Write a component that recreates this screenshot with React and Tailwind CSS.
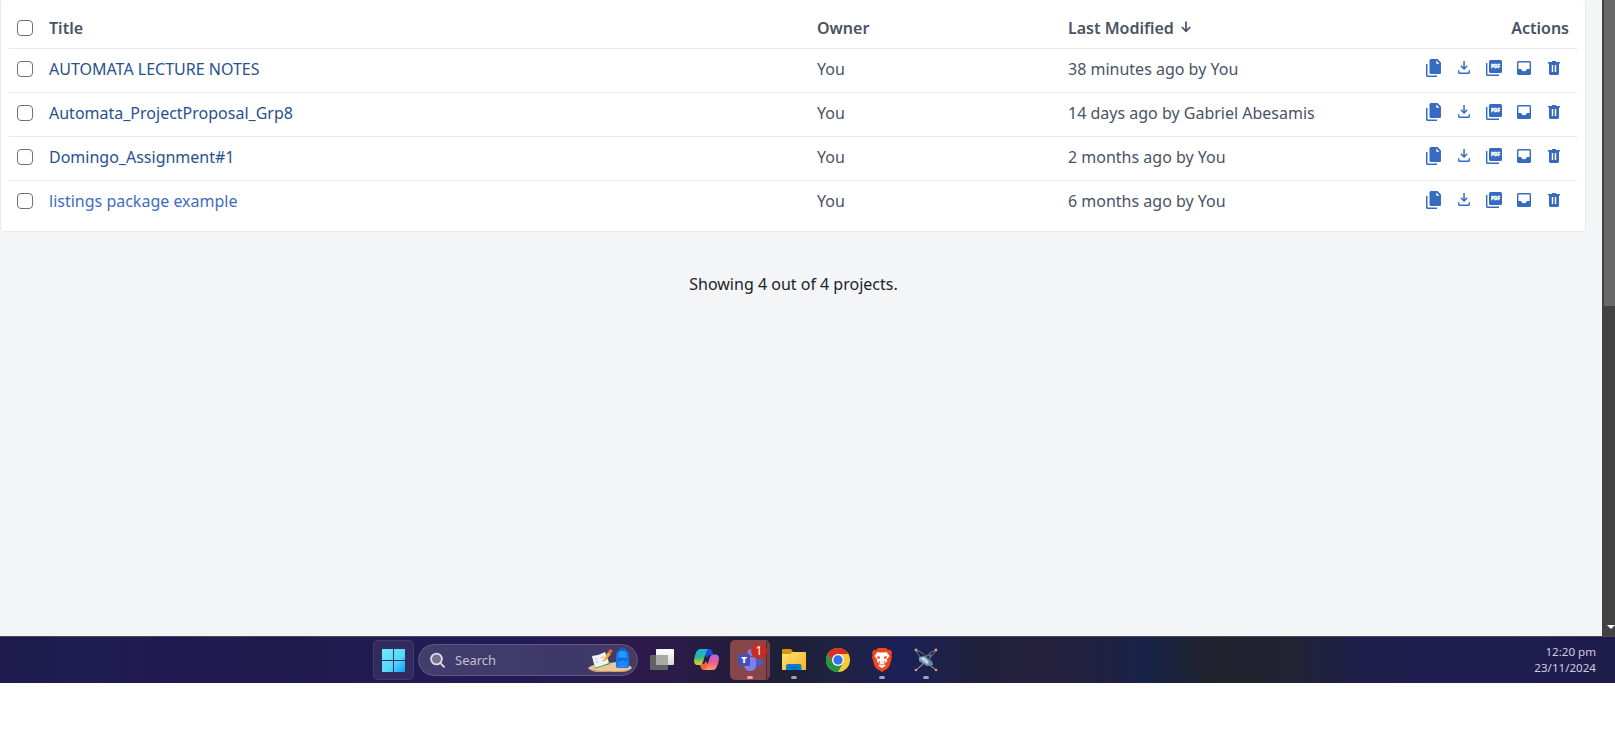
import React from "react";

const projects = [
  { title: "AUTOMATA LECTURE NOTES", modified: "38 minutes ago by You", tone: "text-[#28518f]" },
  { title: "Automata_ProjectProposal_Grp8", modified: "14 days ago by Gabriel Abesamis", tone: "text-[#28518f]" },
  { title: "Domingo_Assignment#1", modified: "2 months ago by You", tone: "text-[#28518f]" },
  { title: "listings package example", modified: "6 months ago by You", tone: "text-[#3f6cc0]" },
];

function Checkbox({ label }) {
  return (
    <input
      type="checkbox"
      aria-label={label}
      className="block size-4 shrink-0 appearance-none rounded-[4px] border border-[#677283] bg-white"
    />
  );
}

function ActionButton({ label, children }) {
  return (
    <button type="button" aria-label={label} className="flex w-[30px] justify-center text-[#366cbf]">
      <svg width="20" height="20" viewBox="0 0 20 20" fill="currentColor">
        {children}
      </svg>
    </button>
  );
}

function Actions() {
  return (
    <div className="flex w-[150px]">
      <ActionButton label="Copy">
        <g transform="translate(-1 0)">
          <path d="M8 1h6.500L18 4.500V14.500a1.500 1.500 0 0 1-1.500 1.500H8a1.500 1.500 0 0 1-1.500-1.500v-12A1.500 1.500 0 0 1 8 1z" />
          <path d="M13.300 2.600v3.200h3.200z" fill="#fff" />
          <path d="M3 6h1.500v11.500H14V19H4.500A1.500 1.500 0 0 1 3 17.500z" />
        </g>
      </ActionButton>
      <ActionButton label="Download">
        <path d="M9.300 3h1.500v6.200l2-2 1 1-3.750 3.700L6.300 8.200l1-1 2 2z" />
        <path d="M4 12.300h1.400v2.200h9.200v-2.200H16v2.200a1.400 1.400 0 0 1-1.400 1.400H5.400A1.400 1.400 0 0 1 4 14.500z" />
      </ActionButton>
      <ActionButton label="Download PDF">
        <path d="M6.500 2h10A1.500 1.500 0 0 1 18 3.500v10a1.500 1.500 0 0 1-1.500 1.500h-10A1.500 1.500 0 0 1 5 13.500v-10A1.500 1.500 0 0 1 6.500 2z" />
        <path d="M2 5h1.400v11.500H15V18H3.500A1.500 1.500 0 0 1 2 16.500z" />
        <text x="11.500" y="10.200" textAnchor="middle" fontSize="4.800" fontWeight="800" fontFamily="Open Sans, sans-serif" fill="#fff" stroke="#fff" strokeWidth=".35">PDF</text>
      </ActionButton>
      <ActionButton label="Archive">
        <path fillRule="evenodd" d="M4.500 3h11A1.500 1.500 0 0 1 17 4.500v11a1.500 1.500 0 0 1-1.500 1.500h-11A1.500 1.500 0 0 1 3 15.500v-11A1.500 1.500 0 0 1 4.500 3zm-.1 1.400v6.600h2.700c.6 1.500 1.500 2.200 2.900 2.200s2.300-.7 2.900-2.200h2.700V4.400z" />
      </ActionButton>
      <ActionButton label="Trash">
        <path fillRule="evenodd" d="M8 3h4v1h4v1.500h-1v10a1.500 1.500 0 0 1-1.500 1.500h-7A1.500 1.500 0 0 1 5 15.500v-10H4V4h4zM7.800 7v7h1.400V7zm3 0v7h1.400V7z" />
      </ActionButton>
    </div>
  );
}

function ProjectTable() {
  return (
    <section className="mr-4 h-[232px] rounded-[4px] border border-t-0 border-[#e7e9ee] bg-white px-2 text-[16px] leading-6 text-[#495365]">
      <div className="flex h-12 items-center pt-2 pl-2 font-semibold">
        <Checkbox label="Select all" />
        <div className="ml-4 w-[768px]">Title</div>
        <div className="w-[251px]">Owner</div>
        <div className="flex flex-1 items-center gap-[7px]">
          Last Modified
          <svg className="mb-[2px]" width="10" height="12" viewBox="0 0 10 12" fill="none" stroke="currentColor" strokeWidth="1.700">
            <path d="M5 .5v9.500M.8 6 5 10.200 9.200 6" />
          </svg>
        </div>
        <div className="pr-2">Actions</div>
      </div>
      {projects.map((p) => (
        <div key={p.title} className="flex h-11 items-center border-t border-[#e7e9ee] pr-2 pb-[3px] pl-2">
          <Checkbox label={"Select " + p.title} />
          <div className={"ml-4 w-[768px] " + p.tone}>{p.title}</div>
          <div className="w-[251px]">You</div>
          <div className="flex-1">{p.modified}</div>
          <div className="pb-[2px]">
            <Actions />
          </div>
        </div>
      ))}
    </section>
  );
}

function WindowsLogo() {
  return (
    <svg width="23" height="23" viewBox="0 0 23 23">
      <defs>
        <linearGradient id="win" gradientUnits="userSpaceOnUse" x1="0" y1="0" x2="23" y2="23">
          <stop offset="0" stopColor="#72eafc" />
          <stop offset=".6" stopColor="#52d8fb" />
          <stop offset="1" stopColor="#0c9cf5" />
        </linearGradient>
      </defs>
      <path fill="url(#win)" d="M0 0h11v11H0zM12 0h11v11H12zM0 12h11v11H0zM12 12h11v11H12z" />
    </svg>
  );
}

function SearchArt() {
  return (
    <svg width="46" height="26" viewBox="0 0 46 26">
      <path d="M1 21q5-4 13-4l16-2 11 3q3 1 4 3-4 4-12 4H13Q4 25 1 21z" fill="#e8c79d" />
      <path d="M2 21.500q8 3 21 2.500 15 1 21-2.500-3 3.500-12 3.500H14Q6 25 2 21.500z" fill="#c39a6b" />
      <path d="m5 10 14-4 4 11-15 4.500z" fill="#368f43" />
      <path d="m5 9 6-1 3 11-6 1.500zM11 8l7-3 4 11-8 3z" fill="#f2f3f4" />
      <path d="m8 12 2-.6m-1 4 2-.6m3-4 3-1m-2 4 4-1" stroke="#b5b7bd" fill="none" />
      <path d="m17 12 4-7 3 2-4 5-4 2.500z" fill="#f6a72c" />
      <path d="m21 4.500 2-2.500 3 2-2 2.500z" fill="#ed644f" />
      <path d="M33 4V2.500q2.500-3 5 0V4" stroke="#1467ca" strokeWidth="1.300" fill="none" />
      <path d="M29 9q0-6.500 6.500-6.500T42 9v10q0 2-2 2h-9q-2 0-2-2z" fill="#1174e6" />
      <path d="M31.500 6q4-4 8 0v4.500h-8z" fill="#259bfa" />
      <path d="M30.500 13.500q5-4 10 0V19h-10z" fill="#1687f5" />
      <path d="M31 13.500q4.500-3 9 0" stroke="#0650bd" fill="none" />
      <path d="M31 19.500h9" stroke="#6d78f4" strokeWidth="1.300" />
    </svg>
  );
}

function TaskView() {
  return (
    <svg width="24" height="24" viewBox="0 0 24 24">
      <defs>
        <linearGradient id="tv" x1="0" y1="0" x2="0" y2="1">
          <stop offset="0" stopColor="#fff" />
          <stop offset="1" stopColor="#dadada" />
        </linearGradient>
      </defs>
      <rect x="0" y="7" width="18" height="15" rx="1" fill="#626262" />
      <rect x="6" y="1" width="18" height="16" rx="1" fill="url(#tv)" />
      <path d="M6 7h12v10H6z" fill="#a9a9a9" />
    </svg>
  );
}

function Copilot() {
  return (
    <svg width="25" height="24" viewBox="0 0 25 24">
      <defs>
        <linearGradient id="cpA" x1="0" y1="0" x2="0" y2="1">
          <stop offset="0" stopColor="#17b4ef" />
          <stop offset=".5" stopColor="#30b68c" />
          <stop offset="1" stopColor="#efd51c" />
        </linearGradient>
        <linearGradient id="cpB" x1="0" y1="0" x2="0" y2="1">
          <stop offset="0" stopColor="#a66af0" />
          <stop offset=".5" stopColor="#f2578f" />
          <stop offset="1" stopColor="#fb9d61" />
        </linearGradient>
      </defs>
      <path d="M7 1h8.500q2 0 2.700 2.500L19.300 7H16q-2 0-3 3L10 5z" fill="#1650d5" />
      <path d="M18 22H9.500q-2 0-2.700-2.500L5.700 16H9q2 0 3-3l3 5z" fill="#f0663c" />
      <path d="M6.500 1h8.500q-2 0-3 3.500L9.200 13.500Q8.200 17 5 17H3.500Q0 17 0 12.500q.5-5 2.500-9Q3.800 1 6.500 1z" fill="url(#cpA)" />
      <path d="M18.500 22H10q2 0 3-3.500l2.800-9Q16.800 6.500 20 6.500h1.500q3.500 0 3.500 4.500-.5 4.500-2.500 8.500-1.300 2.500-4 2.500z" fill="url(#cpB)" />
    </svg>
  );
}

function Teams() {
  return (
    <svg width="24" height="24" viewBox="0 0 24 24">
      <circle cx="19" cy="7" r="3" fill="#5860cb" />
      <path d="M14 9h8q2 0 2 2v4q0 4-5 4z" fill="#5159c7" />
      <circle cx="13" cy="4.500" r="3.500" fill="#7b83eb" />
      <path d="M9 9h9v8q0 6-6 6-5 0-6-6z" fill="#7b83eb" />
      <rect x="0" y="6" width="12" height="12" rx="1" fill="#4650b9" />
      <text x="6" y="15.300" textAnchor="middle" fontSize="9.500" fontWeight="800" fontFamily="Open Sans, sans-serif" fill="#fff">T</text>
    </svg>
  );
}

function Explorer() {
  return (
    <svg width="24" height="24" viewBox="0 0 24 24">
      <defs>
        <linearGradient id="fold" x1="0" y1="0" x2="1" y2="1">
          <stop offset="0" stopColor="#ffe27a" />
          <stop offset="1" stopColor="#f6b61e" />
        </linearGradient>
      </defs>
      <path d="M0 2q0-1 1-1h8l2 3v4H0z" fill="#d99605" />
      <path d="M0 6h8l3-2h12q1 0 1 1v17H0z" fill="url(#fold)" />
      <path d="M4 22v-4q0-2 2-2h11.500q2 0 2 2v4z" fill="#087fd4" />
      <path d="M8 19h8v1.200H8z" fill="#0560a8" />
    </svg>
  );
}

function Chrome() {
  return (
    <svg width="24" height="24" viewBox="0 0 24 24">
      <circle cx="12" cy="12" r="12" fill="#fcc934" />
      <path d="M12 12 6.800 15 1.600 6A12 12 0 0 1 22.400 6H12z" fill="#d93025" />
      <path d="M12 12 17.200 15 12 24A12 12 0 0 1 1.600 6l5.200 9z" fill="#249447" />
      <circle cx="12" cy="12" r="6" fill="#fff" />
      <circle cx="12" cy="12" r="4.700" fill="#2f74e8" />
    </svg>
  );
}

function Brave() {
  return (
    <svg width="20" height="24" viewBox="0 0 20 24">
      <path d="M6 0h8l2 2 2.500-.3L20 5l-.7 2 .7 2-2.500 9-2 2.500L10 24l-5.500-3.500-2-2.500L0 9l.7-2L0 5l1.500-3.300L4 2z" fill="#f4461d" />
      <path d="m5.500 4 2.500.6h4l2.500-.6L17.500 8l-2.700 3.600.4 2.200-2.600 1.500-.6 1 1.800 1.300L10 20.300l-3.800-2.700L8 16.300l-.6-1-2.600-1.500.4-2.200L2.500 8z" fill="#fff" />
      <path d="m4.800 8.300 3.400.5-.4 1.700-2 .3zM15.200 8.300l-3.400.5.400 1.700 2 .3zM9 13.700h2l-1 .9zM7 12.200l1.500 3.300-1.700-1zM13 12.200l-1.500 3.300 1.700-1z" fill="#f4461d" />
      <path d="m8 17 2-.7 2 .7" fill="none" stroke="#f4461d" strokeWidth=".7" />
    </svg>
  );
}

function Satellite() {
  return (
    <svg width="24" height="24" viewBox="0 0 24 24">
      <path d="M2 2q3 9 20 20M22 2Q18 10 2 22M2 2q9 3 11 9t9 11M22 2q-9 3-11 9T2 22" stroke="#a59f9c" strokeWidth=".7" fill="none" />
      <path d="m5 9 5-1 8 5 1 4-6 1-8-5z" fill="#7393ad" />
      <path d="m6 10 4-1 5 5-2 2z" fill="#bdd8e7" />
      <path d="m12 8 5-1-2 5 3 3" stroke="#5c6e81" strokeWidth="1.500" fill="none" />
      <g fill="#dc9d68">
        <circle cx="2" cy="2" r="1.400" />
        <circle cx="22" cy="2" r="1.400" />
        <circle cx="2" cy="22" r="1.300" />
        <circle cx="22" cy="22" r="1.300" />
      </g>
    </svg>
  );
}

function TaskItem({ open, children }) {
  return (
    <div className="relative flex h-10 w-11 items-center justify-center">
      {children}
      {open && <span className="absolute bottom-[1px] left-[19px] h-[3px] w-[6px] rounded-full bg-[#9fa1b5]" />}
    </div>
  );
}

function Taskbar() {
  return (
    <footer className="flex h-[47px] items-center border-t border-[#4b4a5c] bg-[linear-gradient(90deg,#1e1b4c_0%,#1e1d51_5%,#211a52_10%,#201b4e_18%,#231b55_28%,#241b56_33%,#2c1a4b_39%,#2a1b47_42%,#201d3a_46%,#1d2037_49%,#202242_52%,#1b2058_56%,#1d214b_58%,#21213a_61%,#25203e_65%,#202141_68%,#182348_71%,#20232d_75%,#222333_80%,#1e1f49_84%,#201d51_90%,#1e1c4b_100%)] font-['Noto_Sans','Open_Sans',sans-serif]">
      <div className="ml-[373px] flex h-10 w-[41px] items-center justify-center rounded-[5px] border border-white/8 bg-white/7">
        <WindowsLogo />
      </div>
      <div className="ml-1 flex h-8 w-[220px] items-center rounded-full border border-[#5d5884] bg-[linear-gradient(90deg,#423d6d,#3e3969_70%,#483a63)] pr-[4px] pl-[11px] text-[13px] text-[#c4c1d3]">
        <svg width="15" height="16" viewBox="0 0 15 16" fill="#77738f" stroke="#dedce8" strokeWidth="1.800">
          <circle cx="6.500" cy="7" r="5.400" />
          <path d="m10.500 11.200 3.500 3.600" strokeLinecap="round" />
        </svg>
        <span className="mt-px ml-[10px] flex-1">Search</span>
        <SearchArt />
      </div>
      <div className="ml-[2px] flex">
        <TaskItem><TaskView /></TaskItem>
        <TaskItem><Copilot /></TaskItem>
        <div className="relative mr-1 ml-[2px] flex h-10 w-10 items-center rounded-[5px] border-r-[3px] border-[#733f4c] bg-[#864549] pl-2">
          <Teams />
          <span className="absolute right-0 h-9 w-px bg-[#4d2937]" />
          <span className="absolute top-[3px] left-[21px] flex size-4 items-center justify-center rounded-full bg-[#c72c21] text-[12px] leading-none text-white">1</span>
          <span className="absolute bottom-[1px] left-[17px] h-[3px] w-[6px] rounded-full bg-[#ff9aa4]" />
        </div>
        <div className="-ml-[2px] flex">
          <TaskItem open><Explorer /></TaskItem>
          <TaskItem><Chrome /></TaskItem>
          <TaskItem open><Brave /></TaskItem>
          <TaskItem open><Satellite /></TaskItem>
        </div>
      </div>
      <div className="mr-[19px] ml-auto text-right text-[11.6px] leading-4 text-[#cecde0]">
        <div>12:20 pm</div>
        <div>23/11/2024</div>
      </div>
    </footer>
  );
}

export default function App() {
  return (
    <div className="h-[753px] w-[1615px] overflow-hidden bg-white font-['Noto_Sans','Open_Sans',sans-serif]">
      <div className="flex h-[636px]">
        <main className="flex-1 bg-[#f4f5f6]">
          <ProjectTable />
          <p className="mt-10 mr-[15px] text-center text-[16px] leading-6 text-[#1b222c]">Showing 4 out of 4 projects.</p>
        </main>
        <div className="flex w-[13px] flex-col justify-between border-l-2 border-[#424242] bg-[#424242]">
          <div className="h-[306px] bg-[#686868]" />
          <svg className="mb-[6px] ml-[3px]" width="8" height="6" viewBox="0 0 8 6" fill="#fff">
            <path d="M0 1h8L4 5z" />
          </svg>
        </div>
      </div>
      <Taskbar />
    </div>
  );
}
